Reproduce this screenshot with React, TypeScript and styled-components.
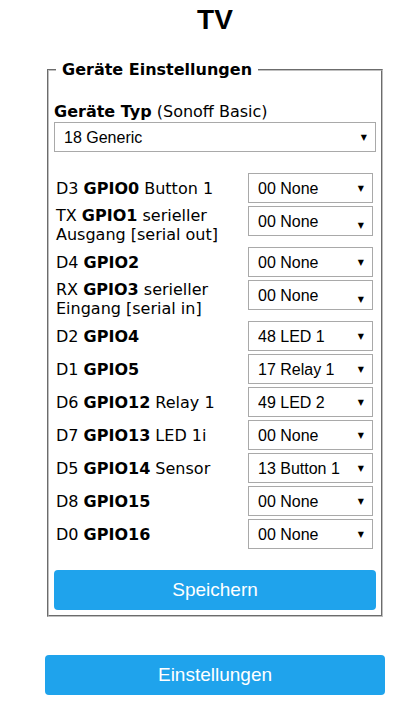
import styled, { createGlobalStyle } from 'styled-components';

const GlobalStyle = createGlobalStyle`
  body {
    margin: 0;
    background: #ffffff;
    color: #000000;
    font-family: 'DejaVu Sans', Verdana, sans-serif;
  }
`;

const Page = styled.div`
  width: 340px;
  margin-left: 45px;
  padding-bottom: 18px;
`;

const Title = styled.h2`
  margin: 4px 0 0;
  font-family: 'Liberation Sans', Arial, sans-serif;
  font-size: 28px;
  line-height: 32px;
  font-weight: bold;
  text-align: center;
`;

const Fieldset = styled.fieldset`
  margin: 24px 2px 0;
  padding: 0 5px 5px;
  border: 2px groove #c0c0c0;
`;

const Legend = styled.legend`
  padding: 0 6px;
  margin-left: 2px;
  font-size: 16px;
  line-height: 20px;
  font-weight: bold;
`;

const TypeLabel = styled.div`
  margin-top: 22px;
  font-size: 16px;
  line-height: 20px;
  b {
    font-weight: bold;
  }
`;

const SelectWrap = styled.div`
  position: relative;
  width: 100%;
  &::after {
    content: '▼';
    position: absolute;
    right: 9px;
    top: 50%;
    transform: translateY(-50%);
    font-size: 8px;
    color: #000;
    pointer-events: none;
  }
`;

const Select = styled.select`
  appearance: none;
  -webkit-appearance: none;
  display: block;
  width: 100%;
  height: 30px;
  margin: 0;
  padding: 0 20px 0 9px;
  border: 1px solid #a9a9a9;
  border-radius: 0;
  background: #ffffff;
  color: #000;
  font-family: 'Liberation Sans', Arial, sans-serif;
  font-size: 16px;
`;

const Grid = styled.div`
  display: grid;
  grid-template-columns: 1fr 125px;
  row-gap: 3px;
  column-gap: 4px;
  margin-top: 21px;
  padding: 0 3px 0 2px;
`;

const PinLabel = styled.div`
  align-self: center;
  font-size: 16px;
  line-height: 19px;
  b {
    font-weight: bold;
  }
`;

const Button = styled.button<{ $top: number }>`
  display: block;
  width: 100%;
  height: 40px;
  margin-top: ${(p) => p.$top}px;
  border: 0;
  border-radius: 4px;
  background: #1fa3ec;
  color: #ffffff;
  font-family: 'Liberation Sans', Arial, sans-serif;
  font-size: 19px;
  cursor: pointer;
`;

type Pin = { pre: string; gpio: string; post?: string; value: string };

const pins: Pin[] = [
  { pre: 'D3', gpio: 'GPIO0', post: 'Button 1', value: '00 None' },
  { pre: 'TX', gpio: 'GPIO1', post: 'serieller Ausgang [serial out]', value: '00 None' },
  { pre: 'D4', gpio: 'GPIO2', value: '00 None' },
  { pre: 'RX', gpio: 'GPIO3', post: 'serieller Eingang [serial in]', value: '00 None' },
  { pre: 'D2', gpio: 'GPIO4', value: '48 LED 1' },
  { pre: 'D1', gpio: 'GPIO5', value: '17 Relay 1' },
  { pre: 'D6', gpio: 'GPIO12', post: 'Relay 1', value: '49 LED 2' },
  { pre: 'D7', gpio: 'GPIO13', post: 'LED 1i', value: '00 None' },
  { pre: 'D5', gpio: 'GPIO14', post: 'Sensor', value: '13 Button 1' },
  { pre: 'D8', gpio: 'GPIO15', value: '00 None' },
  { pre: 'D0', gpio: 'GPIO16', value: '00 None' },
];

export default function App() {
  return (
    <>
      <GlobalStyle />
      <Page>
        <Title>TV</Title>
        <Fieldset>
          <Legend>Geräte Einstellungen</Legend>
          <TypeLabel>
            <b>Geräte Typ</b> (Sonoff Basic)
          </TypeLabel>
          <SelectWrap>
            <Select defaultValue="18 Generic">
              <option>18 Generic</option>
            </Select>
          </SelectWrap>
          <Grid>
            {pins.map((p) => [
              <PinLabel key={p.gpio + 'l'}>
                {p.pre} <b>{p.gpio}</b>
                {p.post ? ' ' + p.post : ''}
              </PinLabel>,
              <SelectWrap key={p.gpio + 's'}>
                <Select defaultValue={p.value}>
                  <option>{p.value}</option>
                </Select>
              </SelectWrap>,
            ])}
          </Grid>
          <Button $top={21}>Speichern</Button>
        </Fieldset>
        <Button $top={38}>Einstellungen</Button>
      </Page>
    </>
  );
}
